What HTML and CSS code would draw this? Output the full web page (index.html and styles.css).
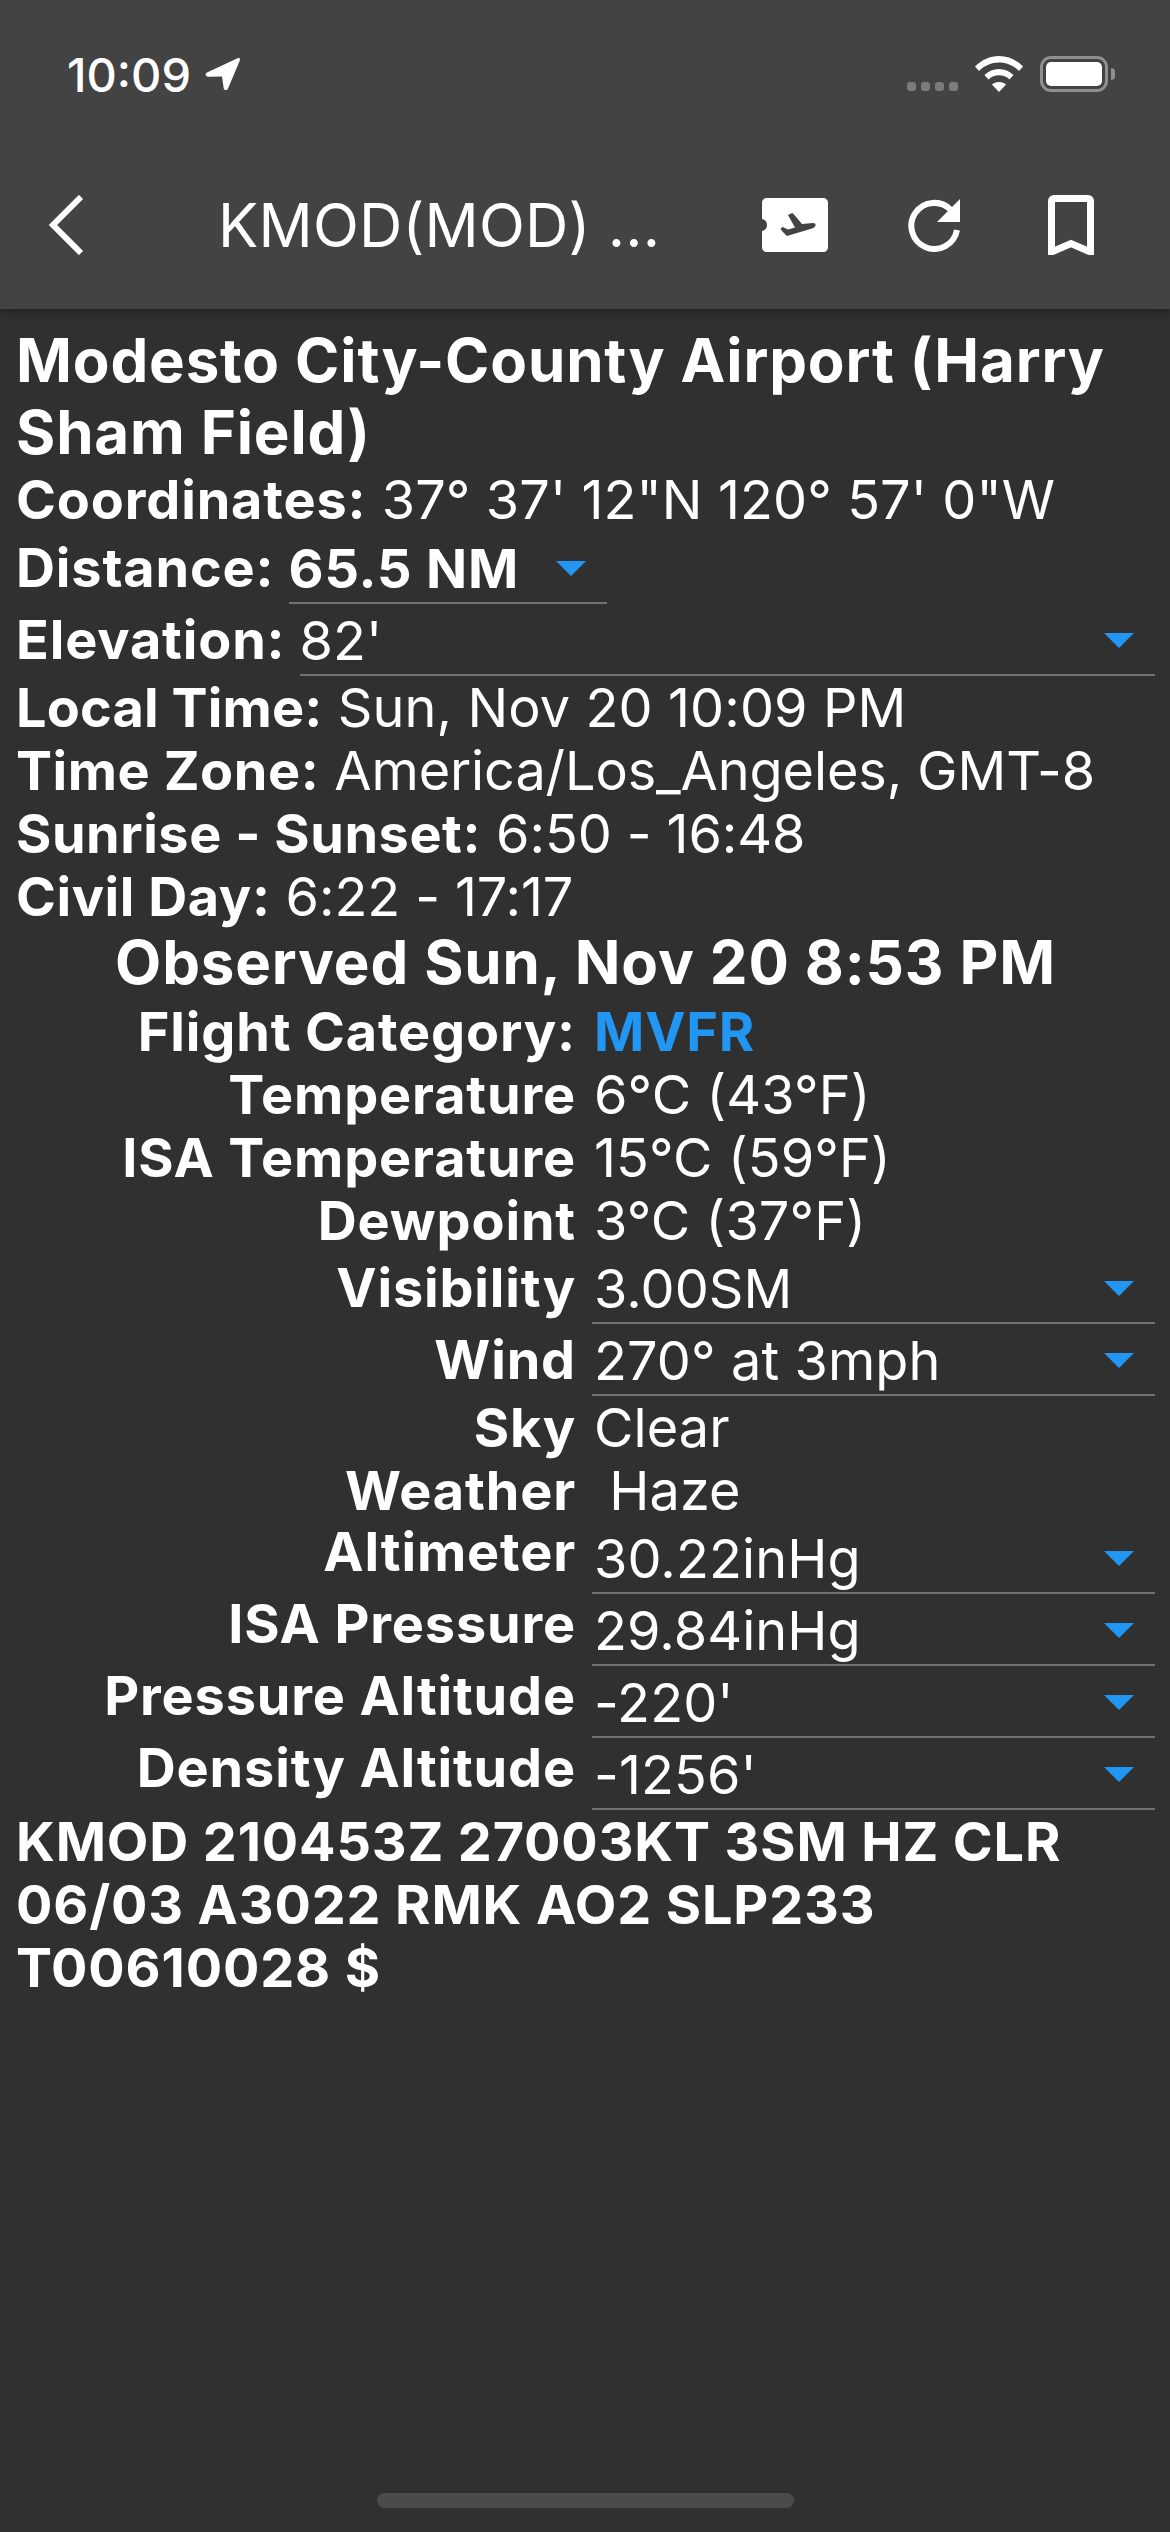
FILE: index.html
```html
<!DOCTYPE html>
<html lang="en">
<head>
  <meta charset="UTF-8">
  <meta name="viewport" content="width=device-width, initial-scale=1.0">
  <title>KMOD</title>
  <link rel="stylesheet" href="styles.css">
</head>
<body>
  <header class="top">
    <div class="status">
      <div class="status-left">
        <span class="clock">10:09</span>
        <svg class="arrow" width="36" height="34" viewBox="0 0 36 34"><path d="M2 15.5 32 1.5C34.500 .5 35.500 1.500 34.600 4L23 31.500C22 33.800 19 33.500 18.700 31.200L17 19.500 3.500 19.800C.5 19.800 -.5 17 2 15.500Z" fill="#fff"/></svg>
      </div>
      <div class="status-right">
        <div class="dots"><i></i><i></i><i></i><i></i></div>
        <svg class="wifi" width="48" height="36" viewBox="0 0 48 36" fill="#fff"><path d="M24 0C33 0 41 3.500 48 10.500L44 15C38.500 9.500 31.500 6.500 24 6.500S9.500 9.500 4 15L0 10.500C7 3.500 15 0 24 0Z"/><path d="M24 13C29.500 13 34.500 15 38.500 19L34.500 23.500C31.500 20.500 28 19.300 24 19.300S16.500 20.500 13.500 23.500L9.500 19C13.500 15 18.500 13 24 13Z"/><path d="M24 26C27 26 29.500 27 31 28.500L24 36 17 28.500C18.500 27 21 26 24 26Z"/></svg>
        <div class="battery"><div class="battery-fill"></div></div>
        <div class="battery-nub"></div>
      </div>
    </div>
    <nav class="nav">
      <svg class="back" width="36" height="60" viewBox="0 0 36 60"><path d="M33 2 5 30 33 58" fill="none" stroke="#fff" stroke-width="6"/></svg>
      <div class="nav-title">KMOD(MOD) ...</div>
      <svg class="ticket" width="66" height="54" viewBox="0 0 66 54"><path fill-rule="evenodd" fill="#fff" d="M5 0H61C64 0 66 2 66 5V49C66 52 64 54 61 54H5C2 54 0 52 0 49V33C3 32.500 5 30 5 27S3 21.500 0 21V5C0 2 2 0 5 0ZM26 17 29 15.500C30 15 31.500 15.500 32 16.500L40 26 51 25C53 25 54 26 53.500 27.500S51.500 30 50 30.500L25 38 20 33 18.500 30.500 21 29 26 31.500 33 29.500 26 17Z"/></svg>
      <svg class="refresh" width="54" height="54" viewBox="0 0 54 54"><path d="M44 12A23 23 0 1 0 50 32" fill="none" stroke="#fff" stroke-width="6"/><path d="M53 1V24H30Z" fill="#fff"/></svg>
      <svg class="bookmark" width="46" height="60" viewBox="0 0 46 60"><path d="M3.500 57V6C3.500 4.500 4.500 3.500 6 3.500H40C41.500 3.500 42.500 4.500 42.500 6V57L23 48.500Z" fill="none" stroke="#fff" stroke-width="7"/></svg>
    </nav>
  </header>

  <main class="content">
    <h1 class="airport">Modesto City-County Airport (Harry Sham Field)</h1>
    <div class="line line-first"><b>Coordinates:</b> 37° 37' 12"N 120° 57' 0"W</div>
    <div class="line line-select">
      <b>Distance:</b>
      <div class="select select-short"><b>65.5 NM</b><span class="caret"></span></div>
    </div>
    <div class="line line-select">
      <b>Elevation:</b>
      <div class="select select-wide"><span>82'</span><span class="caret"></span></div>
    </div>
    <div class="line line-local"><b>Local Time:</b> Sun, Nov 20 10:09 PM</div>
    <div class="line line-tight"><b>Time Zone:</b> America/Los_Angeles, GMT-8</div>
    <div class="line line-tight"><b>Sunrise - Sunset:</b> 6:50 - 16:48</div>
    <div class="line line-tight"><b>Civil Day:</b> 6:22 - 17:17</div>

    <h2 class="observed">Observed Sun, Nov 20 8:53 PM</h2>

    <div class="row"><b class="label">Flight Category:</b><b class="value mvfr">MVFR</b></div>
    <div class="row"><b class="label">Temperature</b><span class="value">6°C (43°F)</span></div>
    <div class="row"><b class="label">ISA Temperature</b><span class="value">15°C (59°F)</span></div>
    <div class="row"><b class="label">Dewpoint</b><span class="value">3°C (37°F)</span></div>
    <div class="row row-select"><b class="label">Visibility</b><div class="select"><span>3.00SM</span><span class="caret"></span></div></div>
    <div class="row row-select"><b class="label">Wind</b><div class="select"><span>270° at 3mph</span><span class="caret"></span></div></div>
    <div class="row"><b class="label">Sky</b><span class="value">Clear</span></div>
    <div class="row"><b class="label">Weather</b><span class="value">&nbsp;Haze</span></div>
    <div class="row row-select row-high"><b class="label">Altimeter</b><div class="select"><span>30.22inHg</span><span class="caret"></span></div></div>
    <div class="row row-select row-high"><b class="label">ISA Pressure</b><div class="select"><span>29.84inHg</span><span class="caret"></span></div></div>
    <div class="row row-select row-high"><b class="label">Pressure Altitude</b><div class="select"><span>-220'</span><span class="caret"></span></div></div>
    <div class="row row-select row-high"><b class="label">Density Altitude</b><div class="select"><span>-1256'</span><span class="caret"></span></div></div>

    <p class="metar">KMOD 210453Z 27003KT 3SM HZ CLR 06/03 A3022 RMK AO2 SLP233 T00610028 $</p>
  </main>

  <div class="home-bar"></div>
</body>
</html>
```

FILE: styles.css
```css
html {
  font-family: Inter, "Liberation Sans", sans-serif;
}

body {
  margin: 0;
  height: 2532px;
  position: relative;
  overflow: hidden;
  background-color: #303030;
  color: #fff;
}

b {
  font-weight: 700;
  letter-spacing: 0.85px;
}

/* top bar */
.top {
  height: 309px;
  background-color: #434343;
  box-shadow: 0 2px 10px rgba(0, 0, 0, 0.35);
}

.status {
  height: 150px;
  padding: 0 55px 0 67px;
  display: flex;
  justify-content: space-between;
}

.status-left {
  display: flex;
  align-items: center;
  gap: 14px;
  height: 148px;
}

.clock {
  font-size: 47px;
  font-weight: 500;
}

.status-right {
  display: flex;
  align-items: flex-start;
  padding-top: 56px;
}

.dots {
  display: flex;
  gap: 5px;
  margin-top: 26px;
  margin-right: 17px;
}

.dots i {
  width: 9px;
  height: 9px;
  border-radius: 3px;
  background-color: #7b7b7b;
}

.wifi {
  margin-right: 17px;
}

.battery {
  width: 68px;
  height: 36px;
  box-sizing: border-box;
  border: 3px solid #8f8f8f;
  border-radius: 11px;
  padding: 3px;
}

.battery-fill {
  height: 100%;
  background-color: #fff;
  border-radius: 5px;
}

.battery-nub {
  width: 4px;
  height: 12px;
  margin: 12px 0 0 3px;
  background-color: #8f8f8f;
  border-radius: 0 6px 6px 0;
}

.nav {
  display: flex;
  align-items: center;
  height: 150px;
  padding-left: 48px;
}

.nav-title {
  width: 678px;
  padding-left: 134px;
  box-sizing: border-box;
  font-size: 60px;
  letter-spacing: 0.2px;
  white-space: nowrap;
}

.refresh {
  margin-left: 79px;
}

.bookmark {
  margin-left: 87px;
}

/* airport info */
.content {
  padding: 15px 15px 0 16px;
  font-size: 54px;
  line-height: 63px;
  letter-spacing: 0.1px;
}

.airport {
  margin: 0;
  font-size: 60px;
  font-weight: 700;
  letter-spacing: 0.85px;
  line-height: 72px;
}

.line {
  white-space: nowrap;
}

.line-first {
  height: 64px;
  line-height: 64px;
}

.line-tight {
  letter-spacing: -0.1px;
}

.line-tight b {
  letter-spacing: 0.55px;
}

.line-local b {
  letter-spacing: 0.15px;
}

.line-select {
  display: flex;
  gap: 14px;
  height: 72px;
  line-height: 72px;
}

.select {
  flex: 1;
  height: 72px;
  box-sizing: border-box;
  display: flex;
  justify-content: space-between;
  align-items: center;
  border-bottom: 2px solid #737373;
  padding: 3px 21px 0 0;
}

.select-short {
  flex: none;
  width: 318px;
}

.caret {
  width: 0;
  height: 0;
  border-left: 15px solid transparent;
  border-right: 15px solid transparent;
  border-top: 15px solid #2196f3;
}

.observed {
  margin: 0;
  padding-bottom: 4px;
  font-size: 60px;
  font-weight: 700;
  letter-spacing: 0.85px;
  line-height: 68px;
  text-align: center;
}

.row {
  display: flex;
  height: 63px;
}

.label {
  width: 560px;
  flex: none;
  text-align: right;
  white-space: nowrap;
}

.value {
  margin-left: 18px;
  white-space: nowrap;
}

.mvfr {
  color: #2196f3;
}

.row-select {
  height: 72px;
  line-height: 72px;
}

.row-select .select {
  margin-left: 16px;
  padding-left: 2px;
}

.row-high .label {
  line-height: 60px;
}

.metar {
  margin: 0;
  font-weight: 700;
  letter-spacing: 0.85px;
}

.home-bar {
  position: absolute;
  left: 377px;
  bottom: 24px;
  width: 417px;
  height: 15px;
  border-radius: 8px;
  background-color: #4b4b4b;
}
```
